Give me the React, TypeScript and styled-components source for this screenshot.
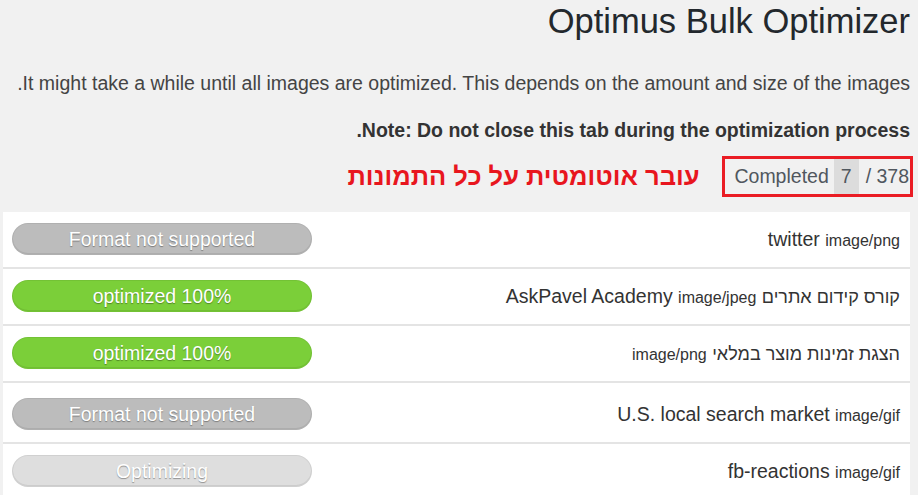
import styled, { createGlobalStyle } from 'styled-components';

type Status = 'unsupported' | 'done' | 'working';

interface ImageRow {
  hebrew?: string;
  name?: string;
  mime: string;
  status: Status;
  label: string;
  extraTop?: number;
}

const rows: ImageRow[] = [
  { name: 'twitter', mime: 'image/png', status: 'unsupported', label: 'Format not supported' },
  { hebrew: 'קורס קידום אתרים', name: 'AskPavel Academy', mime: 'image/jpeg', status: 'done', label: 'optimized 100%' },
  { hebrew: 'הצגת זמינות מוצר במלאי', mime: 'image/png', status: 'done', label: 'optimized 100%' },
  { name: 'U.S. local search market', mime: 'image/gif', status: 'unsupported', label: 'Format not supported', extraTop: 4 },
  { name: 'fb-reactions', mime: 'image/gif', status: 'working', label: 'Optimizing' },
];

const pillColors: Record<Status, string> = {
  unsupported: '#bcbcbc',
  done: '#7bcf39',
  working: '#dedede',
};

export default function App() {
  return (
    <>
      <GlobalStyle />
      <Page>
        <Title>Optimus Bulk Optimizer</Title>
        <Intro>It might take a while until all images are optimized. This depends on the amount and size of the images.</Intro>
        <Note>Note: Do not close this tab during the optimization process.</Note>

        <StatusBar>
          <Counter>
            <CounterLabel>Completed</CounterLabel>
            <CounterValue>7</CounterValue>
            <CounterTotal>/ 378</CounterTotal>
          </Counter>
          <Hint>עובר אוטומטית על כל התמונות</Hint>
        </StatusBar>

        <Table>
          {rows.map((row, i) => (
            <Row key={i} $extraTop={row.extraTop ?? 0}>
              <FileName>
                {row.hebrew && <Hebrew>{row.hebrew}</Hebrew>}
                {row.hebrew && ' '}
                {row.name && `${row.name} `}
                <Mime>{row.mime}</Mime>
              </FileName>
              <Pill $status={row.status}>{row.label}</Pill>
            </Row>
          ))}
        </Table>
      </Page>
    </>
  );
}

const GlobalStyle = createGlobalStyle`
  body {
    margin: 0;
    background: #f1f1f1;
    font-family: "Liberation Sans", Arial, sans-serif;
    color: #444;
  }
`;

const Page = styled.div`
  direction: rtl;
  padding: 1px 8px 0 3px;
  height: 494px;
  overflow: hidden;
`;

const Title = styled.h1`
  margin: 0;
  font-size: 34.5px;
  line-height: 40px;
  font-weight: 400;
  color: #23282d;
`;

const Intro = styled.p`
  margin: 29px 0 0;
  font-size: 19.5px;
  line-height: 26px;
  color: #444;
`;

const Note = styled.p`
  margin: 21px 0 0;
  font-size: 19.5px;
  line-height: 26px;
  font-weight: 700;
  color: #333;
`;

const StatusBar = styled.div`
  display: flex;
  align-items: center;
  gap: 26px;
  margin-top: 16px;
`;

const Counter = styled.div`
  direction: ltr;
  display: flex;
  align-items: stretch;
  height: 35px;
  padding: 0 1px 0 9px;
  outline: 3px solid #ea1c24;
  font-size: 19.5px;
  color: #50575e;
`;

const CounterLabel = styled.span`
  display: flex;
  align-items: center;
`;

const CounterValue = styled.span`
  display: flex;
  align-items: center;
  margin-left: 5px;
  padding: 0 7px;
  background: #dcdcdc;
`;

const CounterTotal = styled.span`
  display: flex;
  align-items: center;
  margin-left: 7px;
`;

const Hint = styled.span`
  font-size: 25.5px;
  font-weight: 700;
  color: #e8161e;
`;

const Table = styled.div`
  margin-top: 18px;
  background: #fff;
`;

const Row = styled.div<{ $extraTop: number }>`
  display: flex;
  align-items: center;
  justify-content: space-between;
  padding: ${({ $extraTop }) => 11 + $extraTop}px 10px 12px 0;
  border-bottom: 2px solid #e4e4e4;
`;

const FileName = styled.div`
  font-size: 19.5px;
  color: #333;
`;

const Hebrew = styled.span`
  font-size: 18px;
`;

const Mime = styled.span`
  font-size: 16px;
`;

const Pill = styled.div<{ $status: Status }>`
  direction: ltr;
  width: 300px;
  height: 32px;
  margin-left: 9px;
  box-sizing: border-box;
  border-radius: 16px;
  border: 1px solid rgba(0, 0, 0, 0.06);
  box-shadow: inset 0 -1px 0 rgba(0, 0, 0, 0.08);
  background: ${({ $status }) => pillColors[$status]};
  color: #fff;
  font-size: 19.5px;
  line-height: 30px;
  text-align: center;
  text-shadow: 0 1px 1px rgba(0, 0, 0, 0.35);
`;
